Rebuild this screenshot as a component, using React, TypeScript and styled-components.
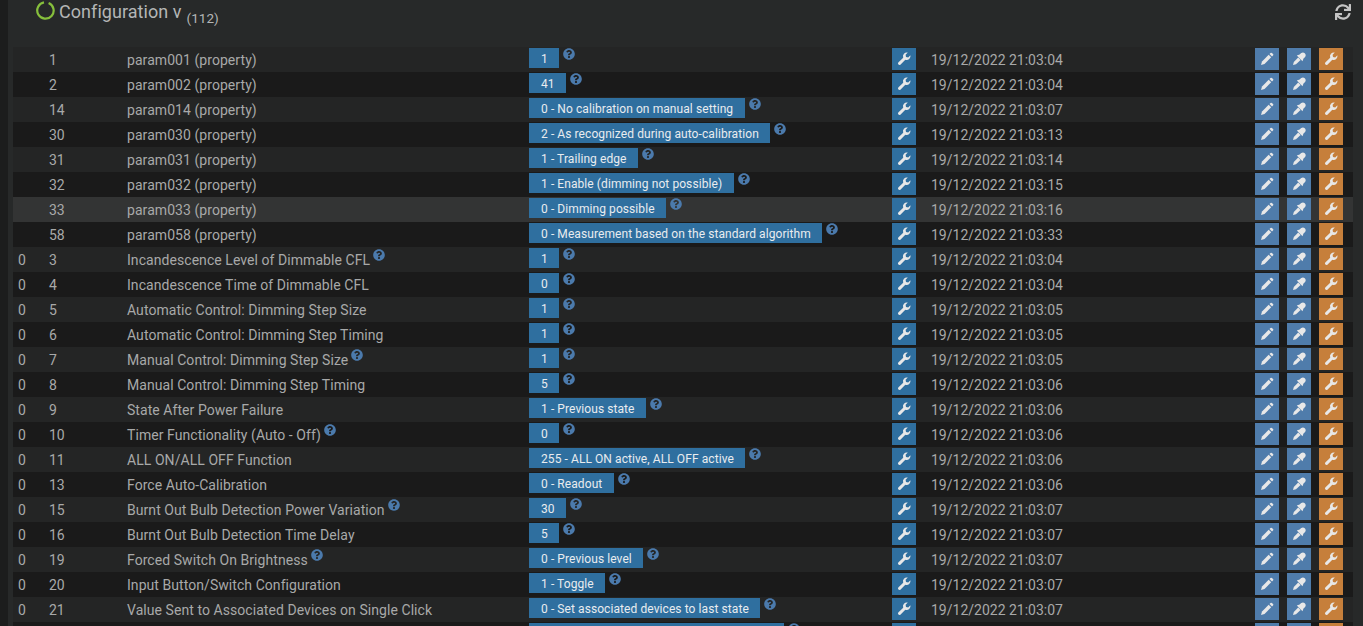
import React from 'react'
import styled, { createGlobalStyle } from 'styled-components'
import { FaSync, FaQuestionCircle } from 'react-icons/fa'

type Param = {
    index?: number
    id: number
    name: string
    value: string
    date: string
    nameHelp?: boolean
    hovered?: boolean
}

const params: Param[] = [
    { id: 1, name: 'param001 (property)', value: '1', date: '19/12/2022 21:03:04' },
    { id: 2, name: 'param002 (property)', value: '41', date: '19/12/2022 21:03:04' },
    { id: 14, name: 'param014 (property)', value: '0 - No calibration on manual setting', date: '19/12/2022 21:03:07' },
    { id: 30, name: 'param030 (property)', value: '2 - As recognized during auto-calibration', date: '19/12/2022 21:03:13' },
    { id: 31, name: 'param031 (property)', value: '1 - Trailing edge', date: '19/12/2022 21:03:14' },
    { id: 32, name: 'param032 (property)', value: '1 - Enable (dimming not possible)', date: '19/12/2022 21:03:15' },
    { id: 33, name: 'param033 (property)', value: '0 - Dimming possible', date: '19/12/2022 21:03:16', hovered: true },
    { id: 58, name: 'param058 (property)', value: '0 - Measurement based on the standard algorithm', date: '19/12/2022 21:03:33' },
    { index: 0, id: 3, name: 'Incandescence Level of Dimmable CFL', value: '1', date: '19/12/2022 21:03:04', nameHelp: true },
    { index: 0, id: 4, name: 'Incandescence Time of Dimmable CFL', value: '0', date: '19/12/2022 21:03:04' },
    { index: 0, id: 5, name: 'Automatic Control: Dimming Step Size', value: '1', date: '19/12/2022 21:03:05' },
    { index: 0, id: 6, name: 'Automatic Control: Dimming Step Timing', value: '1', date: '19/12/2022 21:03:05' },
    { index: 0, id: 7, name: 'Manual Control: Dimming Step Size', value: '1', date: '19/12/2022 21:03:05', nameHelp: true },
    { index: 0, id: 8, name: 'Manual Control: Dimming Step Timing', value: '5', date: '19/12/2022 21:03:06' },
    { index: 0, id: 9, name: 'State After Power Failure', value: '1 - Previous state', date: '19/12/2022 21:03:06' },
    { index: 0, id: 10, name: 'Timer Functionality (Auto - Off)', value: '0', date: '19/12/2022 21:03:06', nameHelp: true },
    { index: 0, id: 11, name: 'ALL ON/ALL OFF Function', value: '255 - ALL ON active, ALL OFF active', date: '19/12/2022 21:03:06' },
    { index: 0, id: 13, name: 'Force Auto-Calibration', value: '0 - Readout', date: '19/12/2022 21:03:06' },
    { index: 0, id: 15, name: 'Burnt Out Bulb Detection Power Variation', value: '30', date: '19/12/2022 21:03:07', nameHelp: true },
    { index: 0, id: 16, name: 'Burnt Out Bulb Detection Time Delay', value: '5', date: '19/12/2022 21:03:07' },
    { index: 0, id: 19, name: 'Forced Switch On Brightness', value: '0 - Previous level', date: '19/12/2022 21:03:07', nameHelp: true },
    { index: 0, id: 20, name: 'Input Button/Switch Configuration', value: '1 - Toggle', date: '19/12/2022 21:03:07' },
    { index: 0, id: 21, name: 'Value Sent to Associated Devices on Single Click', value: '0 - Set associated devices to last state', date: '19/12/2022 21:03:07' },
    { index: 0, id: 22, name: 'Value Sent to Associated Devices on Double Click', value: '1 - Set associated devices to highest levels', date: '19/12/2022 21:03:07' },
]

const GlobalStyle = createGlobalStyle`
    html, body {
        margin: 0;
        height: 626px;
        overflow: hidden;
        background: #1c1d1d;
        font-family: Roboto, "Liberation Sans", sans-serif;
    }
`

const Panel = styled.main`
    margin-left: 8px;
    height: 626px;
    overflow: hidden;
    background: #272929;
`
const Header = styled.header`
    height: 47px;
    box-sizing: border-box;
    padding: 1px 12px 0 28px;
    display: flex;
    align-items: flex-start;
`
const Ring = styled.svg`
    width: 19px;
    height: 19px;
    margin-right: 4px;
    flex: none;
`
const Title = styled.h2`
    margin: 0;
    font-size: 18px;
    font-weight: 400;
    letter-spacing: 0.05px;
    line-height: 21px;
    color: #b4b6b6;
`
const Count = styled.small`
    font-size: 13.5px;
    margin-left: 5px;
    position: relative;
    top: 5px;
`
const Refresh = styled(FaSync)`
    margin-left: auto;
    margin-top: 3px;
    width: 16px;
    height: 16px;
    color: #c4c4c4;
`
const Rows = styled.div`
    margin: 0 10px 0 5px;
`
const Row = styled.div<{ $dark: boolean; $hovered?: boolean }>`
    height: 25px;
    display: grid;
    grid-template-columns: 36px 78px 402px 363px 39px 324px 32px 32px 34px;
    align-items: flex-start;
    font-size: 14px;
    color: #a8a9a9;
    background: ${(p) => (p.$hovered ? '#333434' : p.$dark ? '#1a1a1a' : '#242525')};
`
const Cell = styled.div<{ $indent?: boolean }>`
    line-height: 25px;
    padding-top: 1px;
    padding-left: ${(p) => (p.$indent ? '5px' : '0')};
    white-space: nowrap;
`
const NameCell = styled(Cell)`
    letter-spacing: 0.06px;
`
const Help = styled(FaQuestionCircle)`
    width: 12px;
    height: 12px;
    color: #4b7aac;
    margin-left: 3px;
    position: relative;
    top: -4px;
`
const ValueCell = styled.div`
    display: flex;
    align-items: flex-start;
    padding-top: 1px;
`
const ValueLabel = styled.span`
    height: 20px;
    line-height: 22px;
    padding: 0 11.5px 0 12px;
    font-size: 12px;
    font-weight: 400;
    letter-spacing: 0.08px;
    white-space: nowrap;
    color: #e9ecef;
    background: #2f6f9f;
`
const ValueHelp = styled(FaQuestionCircle)`
    width: 12px;
    height: 12px;
    flex: none;
    color: #4b7aac;
    margin-left: 4px;
`
const IconButton = styled.button<{ $tone: 'value' | 'blue' | 'orange' }>`
    width: 24px;
    height: 22px;
    margin-top: 1px;
    padding: 0;
    border: 0;
    display: grid;
    place-items: center;
    color: #e8e8e8;
    background: ${(p) =>
        p.$tone === 'orange' ? '#c67f3b' : p.$tone === 'value' ? '#2f6f9f' : '#4f7cab'};
`
const Glyph = styled.svg`
    width: 14px;
    height: 14px;
    fill: currentColor;
`

const WrenchIcon = () => (
    <Glyph viewBox="0 0 14 14">
        <path d="M13.4 3.2a3.9 3.9 0 0 1-5.1 4.6l-4.9 4.9a1.5 1.5 0 0 1-2.1-2.1l4.9-4.9A3.9 3.9 0 0 1 10.8.6L8.6 2.8 9 5l2.2.4z" />
    </Glyph>
)
const PencilIcon = () => (
    <Glyph viewBox="0 0 14 14">
        <path d="M1 13l1-3.5 6.7-6.7 2.5 2.5L4.5 12z" />
        <path d="M9.5 2l1-1a1 1 0 0 1 1.4 0L13 2.1a1 1 0 0 1 0 1.4l-1 1z" />
    </Glyph>
)
const DropperIcon = () => (
    <Glyph viewBox="0 0 14 14">
        <path d="M1 13l.8-3 4.4-4.4 2.4 2.4L4 12.2z" />
        <path d="M4.8 3.6L7.6 2.6 9.2 1a2.8 2.8 0 0 1 3.9 3.9l-1.6 1.6-1 2.8z" />
    </Glyph>
)

const ParamRow = ({ param, dark }: { param: Param; dark: boolean }) => (
    <Row $dark={dark} $hovered={param.hovered}>
        <Cell $indent>{param.index}</Cell>
        <Cell>{param.id}</Cell>
        <NameCell>
            {param.name}
            {param.nameHelp && <Help />}
        </NameCell>
        <ValueCell>
            <ValueLabel>{param.value}</ValueLabel>
            <ValueHelp />
        </ValueCell>
        <IconButton $tone="value">
            <WrenchIcon />
        </IconButton>
        <Cell>{param.date}</Cell>
        <IconButton $tone="blue">
            <PencilIcon />
        </IconButton>
        <IconButton $tone="blue">
            <DropperIcon />
        </IconButton>
        <IconButton $tone="orange">
            <WrenchIcon />
        </IconButton>
    </Row>
)

export default function App() {
    return (
        <Panel>
            <GlobalStyle />
            <Header>
                <Ring viewBox="0 0 19 19">
                    <path
                        d="M12.6 1.9 A8.2 8.2 0 1 1 8 1.4"
                        fill="none"
                        stroke="#86bf3c"
                        strokeWidth="2.2"
                    />
                </Ring>
                <Title>
                    Configuration v<Count>(112)</Count>
                </Title>
                <Refresh />
            </Header>
            <Rows>
                {params.map((param, i) => (
                    <ParamRow key={param.id} param={param} dark={i % 2 === 1} />
                ))}
            </Rows>
        </Panel>
    )
}
